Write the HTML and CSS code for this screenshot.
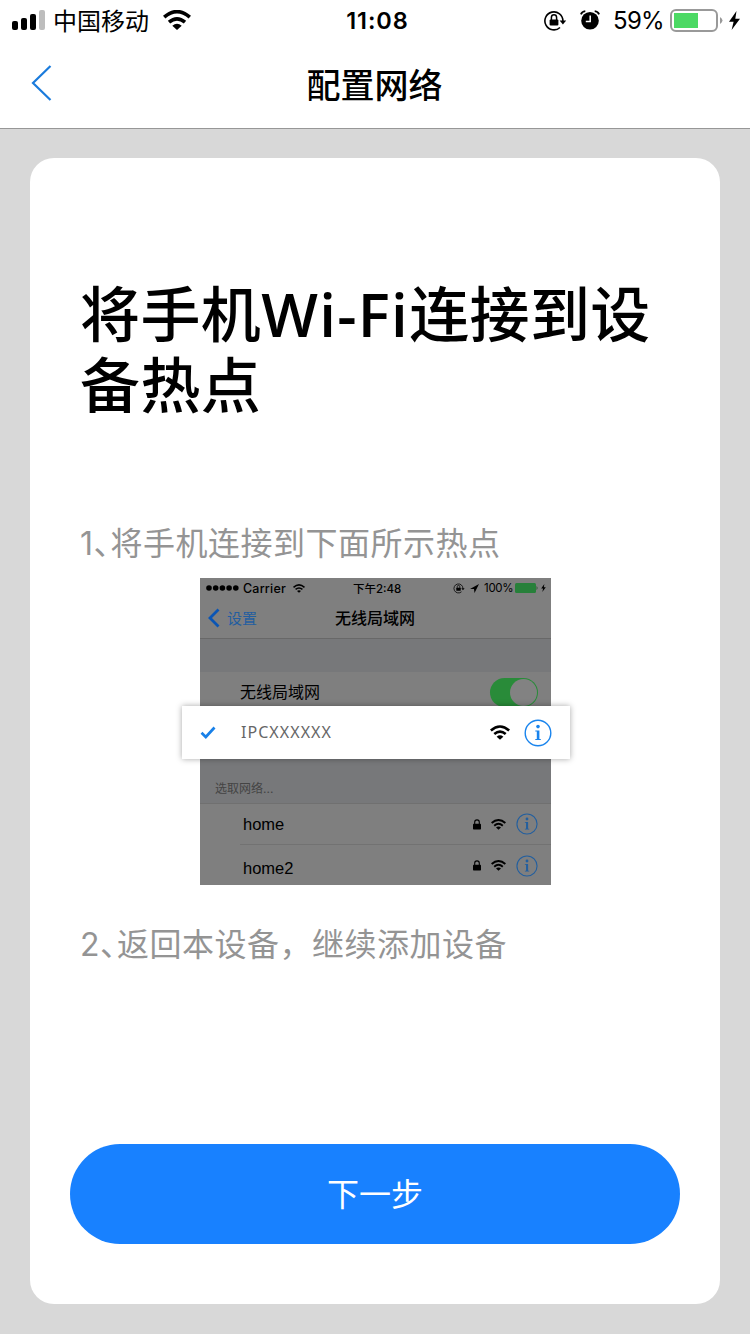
FILE: index.html
```html
<!DOCTYPE html>
<html lang="zh-CN">
<head>
<meta charset="utf-8">
<title>配置网络</title>
<link rel="stylesheet" href="styles.css">
</head>
<body>
<svg width="0" height="0" class="defs">
  <symbol id="wifi" viewBox="0 0 28 20">
    <path d="M1.2 7.2Q14-4 26.8 7.2M6 12.2Q14 5.4 22 12.2" fill="none" stroke="currentColor" stroke-width="3.6"/>
    <path d="M9.3 15.8Q14 11.8 18.7 15.8L14 20Z" fill="currentColor"/>
  </symbol>
  <symbol id="rotation" viewBox="0 0 24 22">
    <path d="M19.9 11A9 9 0 1 0 17 17.5" fill="none" stroke="currentColor" stroke-width="1.6"/>
    <path d="M16.6 10.4h6.6l-3.3 4.2z" fill="currentColor"/>
    <rect x="6.6" y="9.4" width="8.8" height="6.2" rx="1" fill="currentColor"/>
    <path d="M8.4 10V7.4a2.6 2.6 0 0 1 5.2 0V10" fill="none" stroke="currentColor" stroke-width="1.5"/>
  </symbol>
  <symbol id="bolt" viewBox="0 0 11 19"><path d="M7.5 0 0 10.8h4.6L2.6 19 11 7.8H6.3Z" fill="currentColor"/></symbol>
  <symbol id="lock" viewBox="0 0 8 11"><rect y="4.7" width="8" height="5.8" rx=".7" fill="currentColor"/><path d="M1.7 5V3.2a2.3 2.3 0 0 1 4.6 0V5" fill="none" stroke="currentColor" stroke-width="1.1"/></symbol>
  <symbol id="info" viewBox="0 0 28 28"><circle cx="14" cy="14" r="12.8" fill="none" stroke="currentColor" stroke-width="1.4"/><circle cx="14" cy="7.6" r="1.8" fill="currentColor"/><path d="M11.3 11.4h4.1v8.7h1.4v1h-5.5v-1h1.5v-7.7h-1.5z" fill="currentColor"/></symbol>
</svg>
<header class="header">
  <div class="status">
    <div class="status-left">
      <svg class="signal" viewBox="0 0 34 20"><rect y="11" width="6" height="9" rx="2"/><rect x="9" y="8" width="6" height="12" rx="2"/><rect x="18" y="4" width="6" height="16" rx="2"/><rect x="27" width="6" height="20" rx="2" fill="#bdbdbd"/></svg>
      <span class="operator">中国移动</span>
      <svg class="wifi"><use href="#wifi"/></svg>
    </div>
    <span class="clock">11:08</span>
    <div class="status-right">
      <svg class="rotation"><use href="#rotation"/></svg>
      <svg class="alarm" viewBox="0 0 20 20"><circle cx="10" cy="10.7" r="8.8"/><path d="M.9 4.4Q2 1.5 5.3 1.1M14.7 1.1Q18 1.5 19.1 4.4" fill="none" stroke="#000" stroke-width="1.8"/><path d="M10.2 5.6v6H5.8" fill="none" stroke="#fff" stroke-width="1.5"/></svg>
      <span class="percent">59%</span>
      <svg class="battery" viewBox="0 0 53 24"><rect x="1" y="1" width="46" height="21" rx="5" fill="#fff" stroke="#999" stroke-width="2"/><rect x="4" y="4" width="24" height="15" fill="#4cd964"/><path d="M50 8q5 3.5 0 7z" fill="#999"/></svg>
      <svg class="bolt"><use href="#bolt"/></svg>
    </div>
  </div>
  <nav class="nav">
    <svg class="back" viewBox="0 0 22 38"><path d="M19.5 2 2 19l17.5 17" fill="none" stroke="#1a7bdc" stroke-width="2.2"/></svg>
    <span class="nav-title">配置网络</span>
  </nav>
</header>
<main class="card">
  <h1 class="title">将手机<span class="latin">Wi-Fi</span>连接到设<br>备热点</h1>
  <p class="step">1<span class="comma">、</span>将手机连接到下面所示热点</p>
  <div class="guide">
    <div class="phone">
      <div class="mini-status">
        <svg class="dots" viewBox="0 0 33 6"><circle cx="3" cy="3" r="2.8"/><circle cx="9.7" cy="3" r="2.8"/><circle cx="16.4" cy="3" r="2.8"/><circle cx="23.1" cy="3" r="2.8"/><circle cx="29.8" cy="3" r="2.8"/></svg>
        <span class="carrier">Carrier</span>
        <svg class="mini-wifi"><use href="#wifi"/></svg>
        <span class="mini-clock">下午2:48</span>
        <svg class="mini-rotation"><use href="#rotation"/></svg>
        <svg class="arrow" viewBox="0 0 9 9"><path d="M9 0 0 5h4l.5 4z"/></svg>
        <span class="mini-percent">100%</span>
        <svg class="mini-battery" viewBox="0 0 23 10"><rect width="21" height="10" rx="1.5" fill="#27803a"/><path d="M21.6 3q1.8 2 0 4z" fill="#174d23"/></svg>
        <svg class="mini-bolt"><use href="#bolt"/></svg>
      </div>
      <div class="mini-nav">
        <svg class="mini-back" viewBox="0 0 12 20"><path d="M10.5 1.5 2 10l8.5 8.5" fill="none" stroke="#0a55b4" stroke-width="2.8"/></svg>
        <span class="mini-settings">设置</span>
        <span class="mini-title">无线局域网</span>
      </div>
      <div class="gap"></div>
      <div class="wlan"><span class="wlan-label">无线局域网</span><span class="switch"><span class="knob"></span></span></div>
      <div class="choose">选取网络...</div>
      <div class="network first"><span class="name">home</span><svg class="lock"><use href="#lock"/></svg><svg class="row-wifi"><use href="#wifi"/></svg><svg class="row-info"><use href="#info"/></svg></div>
      <div class="network"><span class="name lower">home2</span><svg class="lock"><use href="#lock"/></svg><svg class="row-wifi"><use href="#wifi"/></svg><svg class="row-info"><use href="#info"/></svg></div>
    </div>
    <div class="hotspot">
      <svg class="check" viewBox="0 0 16 13"><path d="M1.5 6.8 5.8 11 14.5 1.5" fill="none" stroke="#1880e8" stroke-width="2.7"/></svg>
      <span class="ssid">IPCXXXXXX</span>
      <svg class="hot-wifi"><use href="#wifi"/></svg>
      <svg class="hot-info"><use href="#info"/></svg>
    </div>
  </div>
  <p class="step second">2<span class="comma">、</span>返回本设备，继续添加设备</p>
  <button class="next">下一步</button>
</main>
</body>
</html>
```

FILE: styles.css
```css
* { box-sizing: border-box; }
body { margin: 0; width: 750px; height: 1334px; overflow: hidden; background: #d8d8d8; color: #000; font-family: Inter, "Noto Sans CJK SC", sans-serif; }
svg { display: block; flex: none; }
span { white-space: nowrap; }
.defs { position: absolute; }
.header { height: 129px; background: #fff; border-bottom: 1px solid #979797; }
.status { height: 40px; display: grid; grid-template-columns: 1fr auto 1fr; align-items: center; }
.status-left, .status-right { display: flex; align-items: center; height: 40px; }
.status-left { padding-left: 12px; }
.status-right { justify-content: flex-end; padding-right: 10px; }
.signal { width: 34px; height: 20px; margin-top: -1px; }
.operator { margin-left: 7px; padding-top: 2px; font-size: 24px; line-height: 40px; }
.wifi { width: 28px; height: 20px; margin-left: 14px; margin-top: -1px; }
.clock { font-size: 23.5px; font-weight: 600; line-height: 40px; padding: 1px 0 0 5px; letter-spacing: .9px; }
.rotation { width: 24px; height: 22px; }
.alarm { width: 20px; height: 20px; margin-left: 13px; margin-top: -1px; }
.percent { margin-left: 13px; padding-top: 1px; font-size: 24px; line-height: 40px; letter-spacing: -.7px; }
.battery { width: 53px; height: 24px; margin-left: 6px; }
.bolt { width: 11px; height: 19px; margin-left: 6px; margin-top: -1px; }
.nav { height: 88px; display: grid; grid-template-columns: 1fr auto 1fr; align-items: center; }
.back { width: 22px; height: 38px; margin-left: 31px; margin-top: -2px; }
.nav-title { font-size: 34px; font-weight: 500; line-height: 48px; padding-top: 4px; margin-left: -1px; }
.card { margin: 29px 30px 0; height: 1146px; border-radius: 24px; background: #fff; display: flex; flex-direction: column; padding: 121px 40px 60px; }
.title { margin: 0 0 0 10px; font-size: 60px; line-height: 71px; font-weight: 500; letter-spacing: .4px; white-space: nowrap; }
.latin { font-family: "Open Sans", sans-serif; font-weight: 600; letter-spacing: 1.3px; }
.step { margin: 99px 0 0 10px; font-size: 32px; line-height: 46px; letter-spacing: .5px; color: #949494; white-space: nowrap; }
.comma { letter-spacing: -15px; }
.guide { position: relative; margin: 11px 0 0 130px; width: 351px; height: 307px; }
.phone { height: 307px; background: #7f7f7f; overflow: hidden; }
.mini-status { display: flex; align-items: center; height: 20px; padding-left: 6px; font-size: 12.5px; font-weight: 500; }
.dots { width: 33px; height: 6px; }
.carrier { width: 46px; margin-left: 4px; letter-spacing: .2px; }
.mini-wifi { width: 12px; height: 9px; margin-left: 4px; }
.mini-clock { width: 50px; margin-left: 48px; margin-top: -1px; font-size: 11.5px; }
.mini-rotation { width: 12px; height: 11px; margin-left: 50px; }
.arrow { width: 9px; height: 9px; margin-left: 5px; }
.mini-percent { width: 28px; margin-left: 5px; font-size: 11.5px; font-weight: 400; letter-spacing: -.3px; }
.mini-battery { width: 23px; height: 10px; margin-left: 3px; }
.mini-bolt { width: 5px; height: 8px; margin-left: 3px; }
.mini-nav { height: 41px; display: flex; align-items: center; padding-left: 8px; border-bottom: 1px solid #686868; }
.mini-back { width: 12px; height: 20px; }
.mini-settings { margin: -2px 0 0 7px; width: 30px; color: #245e9f; font-size: 15px; }
.mini-title { margin: -2px 0 0 78px; font-size: 16px; font-weight: 500; }
.gap { height: 33px; background: #77787a; }
.wlan { height: 41px; padding: 0 13px 0 40px; display: flex; align-items: center; justify-content: space-between; font-size: 16px; }
.wlan-label { margin-top: -4px; }
.switch { width: 48px; height: 29px; border-radius: 15px; background: #298b39; display: flex; justify-content: flex-end; padding: 1px; }
.knob { width: 27px; height: 27px; border-radius: 50%; background: #828282; }
.choose { height: 91px; padding: 66px 0 0 15px; font-size: 12px; line-height: 20px; color: #444; background: #77787a; border-bottom: 1px solid #707070; }
.network { height: 41px; margin-left: 40px; padding: 0 13px 0 3px; display: flex; align-items: center; }
.network.first { border-bottom: 1px solid #727272; }
.name { font-family: "Liberation Sans", sans-serif; font-size: 16.5px; flex: 1; }
.lower { padding-top: 5px; }
.lock { width: 8px; height: 11px; }
.row-wifi { width: 15px; height: 11px; margin: 0 10px; }
.row-info { width: 22px; height: 22px; color: #235f9f; }
.hotspot { position: absolute; left: -18px; top: 128px; width: 388px; height: 53px; padding: 0 18px; display: flex; align-items: center; background: #fff; box-shadow: 0 0 6px rgba(0, 0, 0, .35); }
.check { width: 16px; height: 13px; }
.ssid { flex: 1; margin: -2px 0 0 25px; font-family: "Noto Sans", sans-serif; font-size: 16px; letter-spacing: 1.05px; color: #666; }
.hot-wifi { width: 20px; height: 15px; }
.hot-info { width: 28px; height: 28px; margin-left: 14px; color: #1984ed; }
.step.second { margin-top: 37px; }
.next { margin-top: auto; height: 100px; border: 0; border-radius: 50px; background: #1881ff; color: #fff; font: 32px/46px Inter, "Noto Sans CJK SC", sans-serif; padding: 2px 0 0; }
```
